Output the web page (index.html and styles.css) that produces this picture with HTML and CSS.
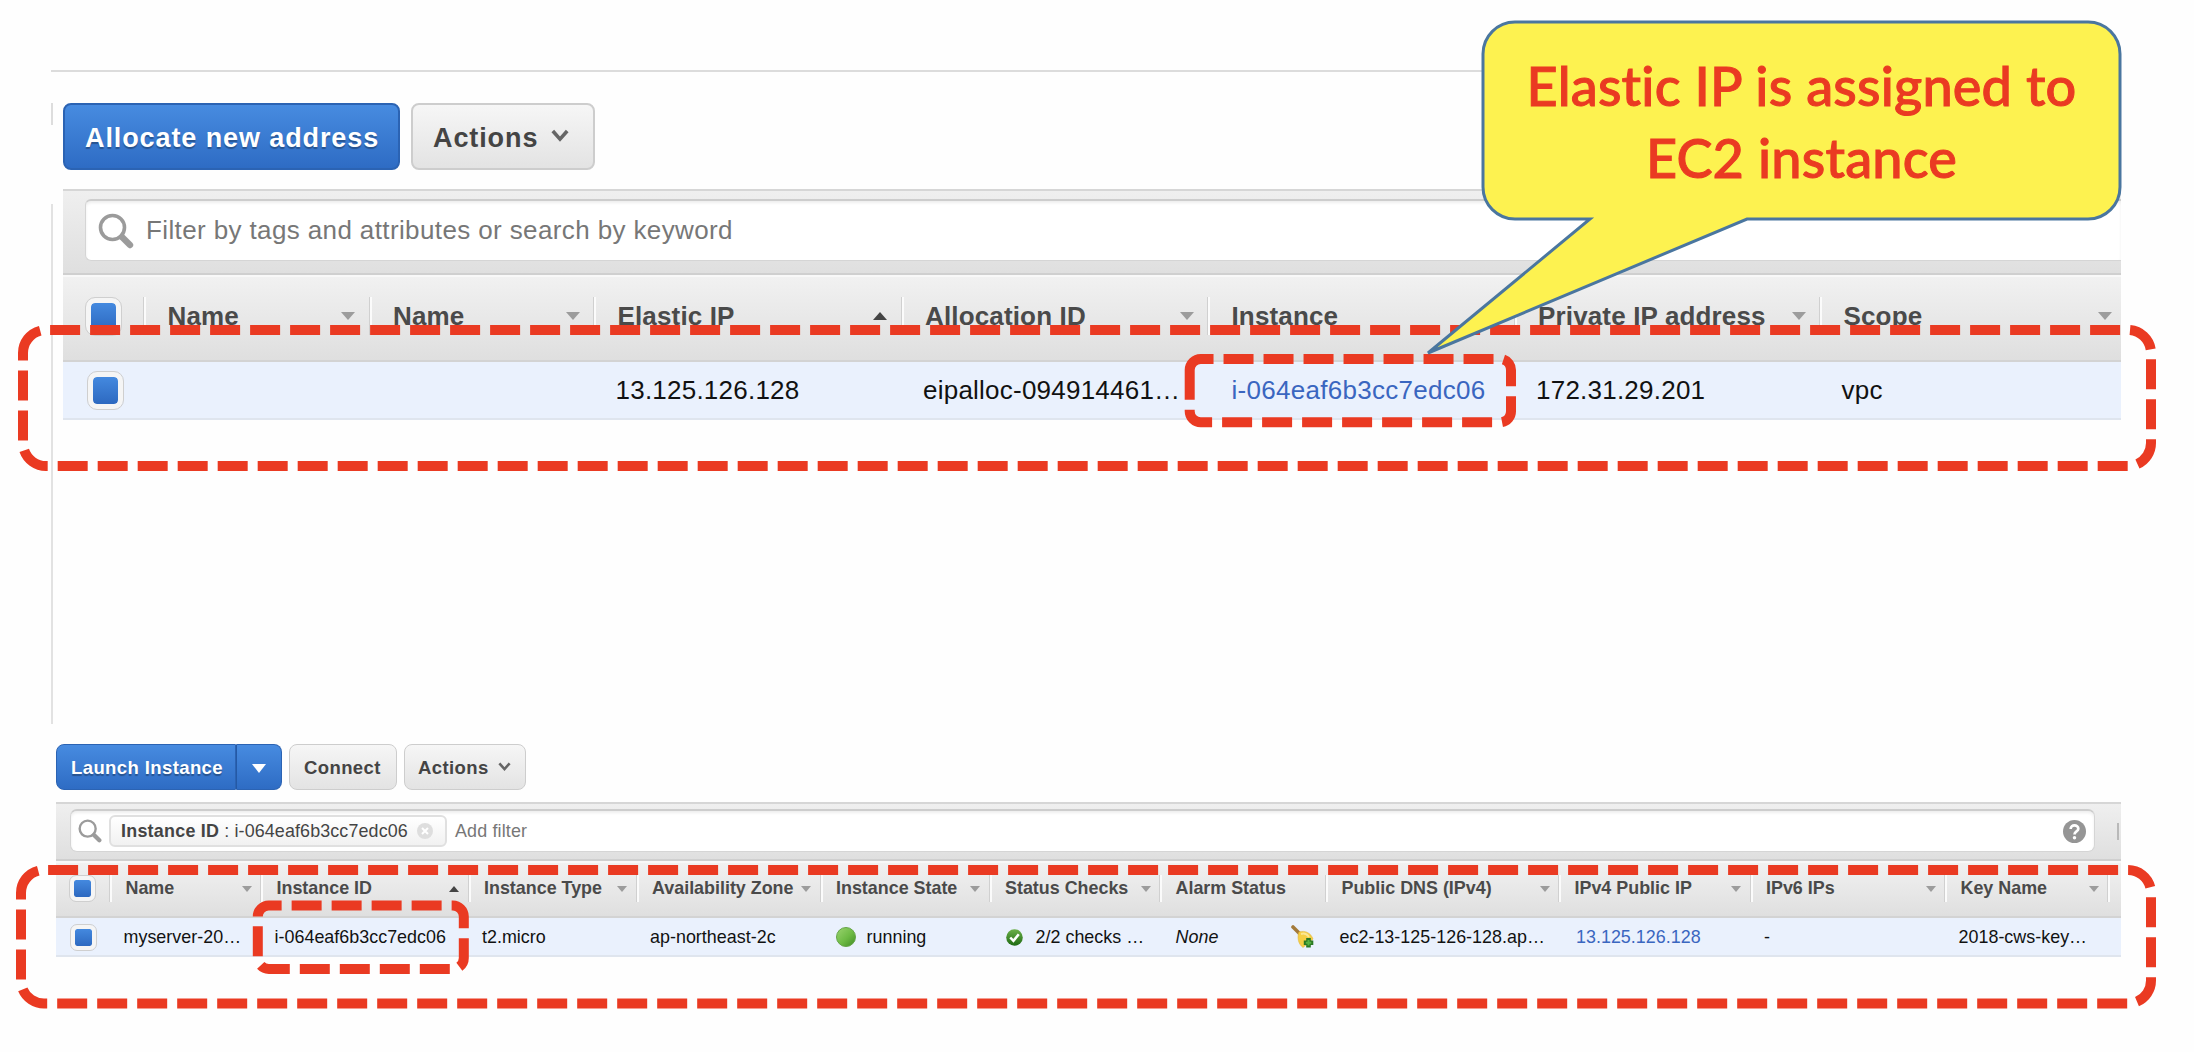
FILE: index.html
```
<!DOCTYPE html>
<html lang="en">
<head>
<meta charset="utf-8">
<title>Elastic IP assignment</title>
<link rel="stylesheet" href="styles.css">
</head>
<body>
<svg class="defs" width="0" height="0" aria-hidden="true">
  <symbol id="search" viewBox="0 0 36 36"><circle cx="14.5" cy="14.5" r="12" fill="none" stroke="#9b9b9b" stroke-width="3.6"/><path d="M24 24l8 8" stroke="#9b9b9b" stroke-width="6.4" stroke-linecap="round"/></symbol>
  <symbol id="chevron" viewBox="0 0 20 14"><path d="M2 2L10 11L18 2" fill="none" stroke="#666" stroke-width="4"/></symbol>
  <linearGradient id="green" x1="0" y1="0" x2="1" y2="1"><stop offset="0" stop-color="#9bd470"/><stop offset=".55" stop-color="#6dba44"/><stop offset="1" stop-color="#3f8a24"/></linearGradient>
  <linearGradient id="ok" x1="0" y1="0" x2="0" y2="1"><stop offset="0" stop-color="#6cb04a"/><stop offset="1" stop-color="#1d6a12"/></linearGradient>
</svg>

<section class="panel addresses">
  <div class="buttons">
    <button class="btn primary">Allocate new address</button>
    <button class="btn">Actions <svg class="chev"><use href="#chevron"/></svg></button>
  </div>
  <div class="toolbar">
    <div class="searchbox"><svg class="search"><use href="#search"/></svg><span>Filter by tags and attributes or search by keyword</span></div>
  </div>
  <div class="row head">
    <div class="check"><i></i></div>
    <div class="th">Name<b></b></div>
    <div class="th">Name<b></b></div>
    <div class="th">Elastic IP<b class="up"></b></div>
    <div class="th">Allocation ID<b></b></div>
    <div class="th">Instance<b></b></div>
    <div class="th">Private IP address<b></b></div>
    <div class="th last">Scope<b></b></div>
  </div>
  <div class="row data">
    <div class="check"><i></i></div>
    <div></div>
    <div></div>
    <div>13.125.126.128</div>
    <div>eipalloc-094914461…</div>
    <div class="link">i-064eaf6b3cc7edc06</div>
    <div>172.31.29.201</div>
    <div>vpc</div>
  </div>
</section>

<section class="panel instances">
  <div class="buttons">
    <div class="split"><button class="btn primary">Launch Instance</button><button class="btn primary more"><b></b></button></div>
    <button class="btn">Connect</button>
    <button class="btn">Actions <svg class="chev"><use href="#chevron"/></svg></button>
  </div>
  <div class="toolbar">
    <div class="searchbox">
      <svg class="search"><use href="#search"/></svg>
      <div class="chip"><strong>Instance ID</strong>&nbsp;:&nbsp;i-064eaf6b3cc7edc06
        <svg class="close" viewBox="0 0 16 16"><circle cx="8" cy="8" r="8" fill="#dedede"/><path d="M5 5l6 6M11 5l-6 6" stroke="#fff" stroke-width="2"/></svg>
      </div>
      <span>Add filter</span>
      <svg class="help" viewBox="0 0 24 24"><circle cx="12" cy="12" r="12" fill="#959595"/><path d="M8 9.300C8 4.200 16 4.400 16 9.200C16 12 12 11.900 12 15" fill="none" stroke="#fff" stroke-width="2.800"/><circle cx="12" cy="18.500" r="1.800" fill="#fff"/></svg>
    </div>
    <div class="tick"></div>
  </div>
  <div class="row head">
    <div class="check"><i></i></div>
    <div class="th">Name<b></b></div>
    <div class="th">Instance ID<b class="up"></b></div>
    <div class="th">Instance Type<b></b></div>
    <div class="th">Availability Zone<b></b></div>
    <div class="th">Instance State<b></b></div>
    <div class="th">Status Checks<b></b></div>
    <div class="th">Alarm Status</div>
    <div class="th">Public DNS (IPv4)<b></b></div>
    <div class="th">IPv4 Public IP<b></b></div>
    <div class="th">IPv6 IPs<b></b></div>
    <div class="th">Key Name<b></b></div>
    <div class="th"></div>
  </div>
  <div class="row data">
    <div class="check"><i></i></div>
    <div>myserver-20…</div>
    <div>i-064eaf6b3cc7edc06</div>
    <div>t2.micro</div>
    <div>ap-northeast-2c</div>
    <div><svg class="dot" viewBox="0 0 20 20"><circle cx="10" cy="10" r="9.500" fill="url(#green)" stroke="#65a548"/></svg>running</div>
    <div><svg class="ok" viewBox="0 0 16 16"><circle cx="8" cy="8" r="7.800" fill="url(#ok)"/><path d="M4 8l3 3.200L12 5" fill="none" stroke="#fff" stroke-width="2.400"/></svg>2/2 checks …</div>
    <div><em>None</em><svg class="bell" viewBox="0 0 24 24"><path d="M2 2l7 7" stroke="#a37a3b" stroke-width="3.600" stroke-linecap="round"/><path d="M8 7C14 5 20 8 22 14L12 22.500C7 19 6 12 8 7Z" fill="#f5cf45" stroke="#e3b53a" stroke-width=".6"/><path d="M10 9c3-1 6 0 8 3" fill="none" stroke="#fbe795" stroke-width="2"/><path d="M17.500 13v9.500M12.800 17.700h9.500" stroke="#2a7a24" stroke-width="4.600"/><path d="M17.500 15v5.500M14.800 17.700h5.500" stroke="#58b443" stroke-width="2"/></svg></div>
    <div>ec2-13-125-126-128.ap…</div>
    <div class="link">13.125.126.128</div>
    <div>-</div>
    <div>2018-cws-key…</div>
    <div></div>
  </div>
</section>

<svg class="marks" viewBox="0 0 2194 1052" aria-hidden="true">
  <path d="M23 353a23 23 0 0 1 23-23H2128a23 23 0 0 1 23 23V443a23 23 0 0 1-23 23H46a23 23 0 0 1-23-23Z"/>
  <path d="M21 893a23 23 0 0 1 23-23H2128a23 23 0 0 1 23 23V980.500a23 23 0 0 1-23 23H44a23 23 0 0 1-23-23Z"/>
  <path d="M1189.700 370a11 11 0 0 1 11-11H1500a11 11 0 0 1 11 11V411.300a11 11 0 0 1-11 11H1200.700a11 11 0 0 1-11-11Z"/>
  <path d="M257.800 916.500a11 11 0 0 1 11-11H452.800a11 11 0 0 1 11 11V958a11 11 0 0 1-11 11H268.800a11 11 0 0 1-11-11Z"/>
</svg>

<div class="callout">
  <svg viewBox="0 0 712 350" aria-hidden="true"><path d="M76 13H649A32 32 0 0 1 681 45V178A32 32 0 0 1 649 210H308L-11 344L151 210H76A32 32 0 0 1 44 178V45A32 32 0 0 1 76 13Z" fill="#fdf250" stroke="#4a769f" stroke-width="3"/></svg>
  <p>Elastic IP is assigned to<br>EC2 instance</p>
</div>
</body>
</html>
```
FILE: styles.css
```
* { box-sizing: border-box; }
body { margin: 0; width: 2194px; height: 1052px; position: relative; overflow: hidden; background: #fefefe; font-family: "Liberation Sans", Arial, sans-serif; color: #111; padding-top: 70px; }
.defs { position: absolute; }
button { font: inherit; letter-spacing: inherit; margin: 0; }

.panel { width: 2070px; margin-left: 51px; }
.addresses { height: 654px; padding: 31px 0 0 12px; border-top: 2px solid #dcdcdc; background: linear-gradient(#ddd, #ddd) 0 31px / 2px 22px no-repeat, linear-gradient(#e2e2e2, #e2e2e2) 0 132px / 2px 520px no-repeat; font-size: 26px; letter-spacing: .3px; }
.instances { padding: 20px 0 0 5px; font-size: 17.900px; }

.buttons { display: flex; }
.btn { display: flex; align-items: center; white-space: nowrap; border: 1px solid #cdcdcd; border-radius: 8px; background: linear-gradient(#f6f6f6, #e3e3e3); color: #444; font-weight: bold; }
.btn.primary { background: linear-gradient(#478be0, #2e6cc4); border-color: #2b63b3; color: #fff; text-shadow: 0 2px 1px rgba(0, 0, 0, .3); }
.addresses .buttons { gap: 11px; height: 67px; margin-bottom: 19px; font-size: 27px; letter-spacing: .9px; }
.addresses .btn { padding: 3px 22px 0 21px; border-width: 2px; }
.addresses .btn.primary { width: 337px; padding-left: 20px; }
.addresses .btn:last-child { width: 184px; padding-left: 20px; }
.chev { width: 18px; height: 13px; margin: 0 0 5px 13px; }
.instances .buttons { gap: 7px; height: 46px; margin-bottom: 12px; font-size: 18.500px; letter-spacing: .4px; }
.instances .btn { padding: 2px 13px 0 14px; }
.instances .buttons > .btn:last-child { width: 122px; padding-left: 13px; }
.instances .buttons > .btn:nth-child(2) { width: 108px; }
.instances .chev { width: 13px; height: 9px; margin: 0 0 4px 9px; }
.split { display: flex; width: 226px; }
.split .btn:first-child { width: 180px; border-radius: 8px 0 0 8px; }
.instances .split .more { width: 46px; padding: 2px 0 0; justify-content: center; border-radius: 0 8px 8px 0; border-left-color: #2459a5; }
.more b { border: 7px solid transparent; border-top: 9px solid #fff; border-bottom: 0; }

.toolbar { display: flex; background: linear-gradient(#efefef, #dfdfdf); border-top: 2px solid #d6d6d6; border-bottom: 2px solid #cfcfcf; }
.searchbox { flex: 1; display: flex; align-items: center; background: #fff; border: 1px solid #d5d5d5; border-top: 2px solid #cdcdcd; box-shadow: inset 0 2px 3px rgba(0, 0, 0, .07); white-space: nowrap; color: #777; }
.addresses .toolbar { height: 86px; padding: 8px 0 12px 22px; }
.addresses .searchbox { border-radius: 6px 0 0 6px; border-right: 0; padding-left: 12px; }
.addresses .search { width: 36px; height: 36px; margin-right: 12px; }
.addresses .searchbox span { letter-spacing: .38px; }
.instances .toolbar { height: 59px; padding: 5px 26px 7px 14px; position: relative; }
.instances .searchbox { border-radius: 7px; padding: 0 8px 0 7px; }
.instances .search { width: 24px; height: 24px; margin-right: 7px; }
.chip { display: flex; align-items: center; width: 338px; height: 32px; padding-left: 10px; margin-right: 8px; border: 2px solid #e0e0e0; border-radius: 6px; background: linear-gradient(#fff, #f1f1f1); color: #444; letter-spacing: .12px; }
.chip strong { color: #444; letter-spacing: .25px; }
.close { width: 16px; height: 16px; margin-left: 9px; }
.instances .searchbox span { letter-spacing: .15px; }
.help { width: 23px; height: 23px; margin-left: auto; }
.tick { position: absolute; right: 2px; top: 19px; width: 2px; height: 17px; background: #b9b9b9; }

.row { display: grid; }
.addresses .row { grid-template-columns: 81px 225.500px 224.500px 307.500px 306.500px 306.500px 305.500px 301px; }
.instances .row { grid-template-columns: 54px 151px 207.500px 168px 184px 169px 170.500px 166px 233px 191.500px 194.500px 163px 13px; }
.row > div { display: flex; align-items: center; white-space: nowrap; }
.head { background: linear-gradient(#f1f1f1, #dfdfdf); border-top: 2px solid #f8f8f8; border-bottom: 2px solid #d3d3d3; color: #4a4a4a; font-weight: bold; }
.data { background: #eaf1fd; border-bottom: 2px solid #dfe5ee; }
.link { color: #3a66c0; }
.head .th { border-left: 2px solid #fbfbfb; box-shadow: -1px 0 #d0d0d0; }
.th b { margin-left: auto; border: 7px solid transparent; border-top: 8px solid #9c9c9c; border-bottom: 0; }
.th b.up { border-top: 0; border-bottom: 8px solid #444; }
.addresses .head { height: 87px; letter-spacing: .15px; }
.addresses .th { height: 38px; margin-top: 20px; padding: 0 14.500px 0 21.500px; }
.addresses .th.last { padding-right: 9px; }
.addresses .data { height: 58px; letter-spacing: .23px; }
.addresses .data > div { padding-left: 21.500px; }
.addresses .data > .link { padding-left: 23.500px; letter-spacing: .28px; }
.instances .head { height: 57px; }
.instances .th { height: 27px; margin-top: 12px; padding: 0 9.500px 0 13.500px; }
.instances .th b { border-width: 6px 5px 0; }
.instances .th b.up { border-width: 0 5px 6px; }
.instances .data { height: 39px; padding-top: 1px; letter-spacing: .02px; }
.instances .data > div { padding-left: 13.500px; }
.instances .data > .link { padding-left: 17px; }

.check i { display: block; border: 5px solid #f5f5f5; outline: 1px solid #cfcfcf; background: linear-gradient(#4489df, #2d69c0); background-clip: padding-box; border-radius: 9px; width: 35px; height: 37px; }
.row > .check { padding: 0 !important; }
.addresses .data .check i { margin-left: 25px; }
.addresses .head .check i { margin: 0 0 4px 23px; }
.instances .check i { border-width: 4px; border-radius: 6px; width: 25px; height: 25px; margin-left: 14px; margin-bottom: 2px; }
.instances .data .check i { margin-left: 15px; margin-bottom: 0; }

.dot { width: 20px; height: 20px; margin: 0 11px 0 1.500px; }
.ok { width: 17px; height: 17px; margin: 0 13px 0 2.500px; }
.instances em { margin-left: 2px; }
.bell { width: 24px; height: 24px; margin-left: auto; margin-right: 11px; }

/* Annotations drawn over the console */
.marks { position: absolute; inset: 0; width: 2194px; height: 1052px; fill: none; stroke: #ea3a22; stroke-width: 10; stroke-dasharray: 30 10; }
.callout { position: absolute; left: 1439px; top: 9px; width: 712px; height: 350px; }
.callout svg { position: absolute; inset: 0; width: 712px; height: 350px; overflow: visible; }
.callout p { position: absolute; left: 44px; top: 41px; width: 637px; margin: 0; text-align: center; font: 500 54px/71.500px Lato, sans-serif; font-variant-ligatures: none; -webkit-text-stroke: 1px #ea3a22; letter-spacing: .2px; color: #ea3a22; }
```
